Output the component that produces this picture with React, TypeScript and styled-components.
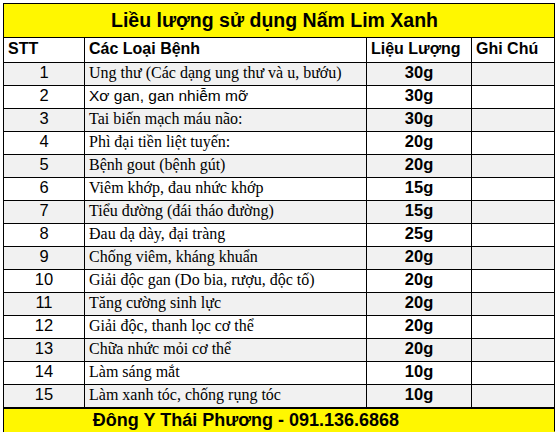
import React from "react";
import styled, { createGlobalStyle } from "styled-components";

const Global = createGlobalStyle`
  html, body { margin: 0; padding: 0; background: #ffffff; }
  body { font-family: "Liberation Sans", Arial, sans-serif; color: #000; }
`;

const Page = styled.div`
  padding: 3px 0 0 3px;
  width: 558px;
  height: 434px;
  box-sizing: border-box;
  overflow: hidden;
`;

const Sheet = styled.div`
  display: grid;
  grid-template-columns: 81px 282px 105px 83px;
  border-left: 1px solid #000;
  border-top: 1px solid #000;
  box-sizing: content-box;
  width: 551px;
`;

const Banner = styled.div<{ $tall: number; $shift: number; $size: number; $thickTop?: boolean }>`
  grid-column: 1 / -1;
  background: #fff700;
  height: ${(p) => p.$tall}px;
  border-right: 1px solid #000;
  border-bottom: 1px solid ${(p) => (p.$thickTop ? "transparent" : "#000")};
  border-top: ${(p) => (p.$thickTop ? "2px solid #000" : "0")};
  margin-top: ${(p) => (p.$thickTop ? "-1px" : "0")};
  display: flex;
  align-items: center;
  justify-content: center;
  padding-right: ${(p) => p.$shift}px;
  font-weight: 700;
  font-size: ${(p) => p.$size}px;
  white-space: nowrap;
`;

const Cell = styled.div<{ $gray?: boolean; $align?: "left" | "center"; $serif?: boolean; $bold?: boolean; $size?: number; $h: number }>`
  height: ${(p) => p.$h}px;
  background: ${(p) => (p.$gray ? "#f1f1f1" : "#ffffff")};
  border-right: 1px solid #000;
  border-bottom: 1px solid #000;
  display: flex;
  align-items: center;
  justify-content: ${(p) => (p.$align === "center" ? "center" : "flex-start")};
  padding: 0 0 3px ${(p) => (p.$align === "center" ? 0 : 4)}px;
  box-sizing: border-box;
  font-family: ${(p) => (p.$serif ? '"Liberation Serif", "Times New Roman", serif' : '"Liberation Sans", Arial, sans-serif')};
  font-weight: ${(p) => (p.$bold ? 700 : 400)};
  font-size: ${(p) => p.$size ?? 16}px;
  white-space: nowrap;
  overflow: hidden;
`;

type Row = { n: number; name: string; dose: string; sans?: boolean };

const rows: Row[] = [
  { n: 1, name: "Ung thư (Các dạng ung thư và u, bướu)", dose: "30g" },
  { n: 2, name: "Xơ gan, gan nhiễm mỡ", dose: "30g", sans: true },
  { n: 3, name: "Tai biến mạch máu não:", dose: "30g" },
  { n: 4, name: "Phì đại tiền liệt tuyến:", dose: "20g" },
  { n: 5, name: "Bệnh gout (bệnh gút)", dose: "20g" },
  { n: 6, name: "Viêm khớp, đau nhức khớp", dose: "15g" },
  { n: 7, name: "Tiểu đường (đái tháo đường)", dose: "15g" },
  { n: 8, name: "Đau dạ dày, đại tràng", dose: "25g" },
  { n: 9, name: "Chống viêm, kháng khuẩn", dose: "20g" },
  { n: 10, name: "Giải độc gan (Do bia, rượu, độc tố)", dose: "20g" },
  { n: 11, name: "Tăng cường sinh lực", dose: "20g" },
  { n: 12, name: "Giải độc, thanh lọc cơ thể", dose: "20g" },
  { n: 13, name: "Chữa nhức mỏi cơ thể", dose: "20g" },
  { n: 14, name: "Làm sáng mắt", dose: "10g" },
  { n: 15, name: "Làm xanh tóc, chống rụng tóc", dose: "10g" },
];

export default function App() {
  return (
    <>
      <Global />
      <Page>
        <Sheet>
          <Banner $tall={33} $shift={9} $size={19.5}>
            Liều lượng sử dụng Nấm Lim Xanh
          </Banner>
          <Cell $h={25} $bold $size={16}>STT</Cell>
          <Cell $h={25} $bold $size={16}>Các Loại Bệnh</Cell>
          <Cell $h={25} $bold $size={16}>Liệu Lượng</Cell>
          <Cell $h={25} $bold $size={16}>Ghi Chú</Cell>
          {rows.map((r) => {
            const gray = r.n % 2 === 1;
            return (
              <React.Fragment key={r.n}>
                <Cell $h={23} $gray={gray} $align="center" $size={16.5}>{r.n}</Cell>
                <Cell $h={23} $gray={gray} $serif={!r.sans} $size={r.sans ? 15.5 : 16}>{r.name}</Cell>
                <Cell $h={23} $gray={gray} $align="center" $bold $size={16.5}>{r.dose}</Cell>
                <Cell $h={23} $gray={gray} />
              </React.Fragment>
            );
          })}
          <Banner $tall={22} $shift={66} $size={18} $thickTop>
            Đông Y Thái Phương - 091.136.6868
          </Banner>
        </Sheet>
      </Page>
    </>
  );
}
